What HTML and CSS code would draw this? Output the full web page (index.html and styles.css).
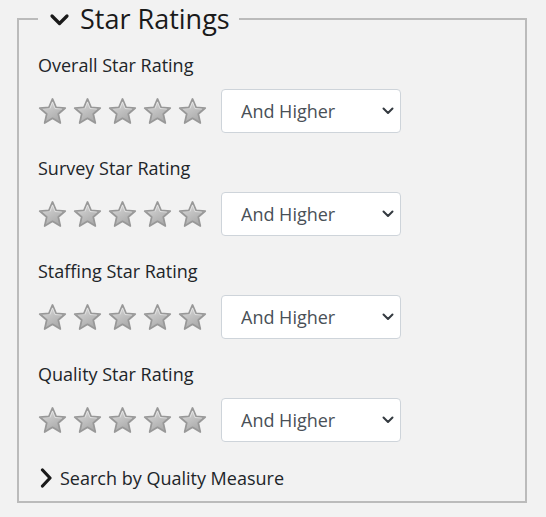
FILE: index.html
```html
<!DOCTYPE html>
<html>
<head>
<meta charset="utf-8">
<link rel="stylesheet" href="styles.css">
</head>
<body>
<svg width="0" height="0" class="defs">
  <defs>
    <linearGradient id="sg" x1="0" y1="0" x2="0.6" y2="1">
      <stop offset="0" stop-color="#e6e6e6"/>
      <stop offset="0.5" stop-color="#c4c4c4"/>
      <stop offset="1" stop-color="#a9a9a9"/>
    </linearGradient>
    <symbol id="star" viewBox="0 0 30 29">
      <path d="M15 1.5 L18.7 10.1 L28.2 10.9 L21 17.1 L23.1 26.4 L15 21.5 L6.9 26.4 L9 17.1 L1.8 10.9 L11.3 10.1 Z" fill="url(#sg)" stroke="#989898" stroke-width="1.8" stroke-linejoin="round"/>
      <path d="M15 4.5 L17.6 11.4 L24.6 12 M15 4.5 L12.4 11.4" fill="none" stroke="#f4f4f4" stroke-width="0.8" stroke-linejoin="round" opacity="0.7"/>
    </symbol>
  </defs>
</svg>
<fieldset class="panel">
  <legend class="panel-title">
    <svg class="chev-down" width="21" height="14" viewBox="0 0 21 14"><path d="M3 3 L10.5 10.5 L18 3" fill="none" stroke="#1a1a1a" stroke-width="3.2" stroke-linecap="round" stroke-linejoin="round"/></svg>
    <span>Star Ratings</span>
  </legend>

  <div class="group">
    <div class="label">Overall Star Rating</div>
    <div class="row">
      <div class="stars">
        <svg class="star"><use href="#star"/></svg><svg class="star"><use href="#star"/></svg><svg class="star"><use href="#star"/></svg><svg class="star"><use href="#star"/></svg><svg class="star"><use href="#star"/></svg>
      </div>
      <div class="select-wrap">
        <select class="select"><option>And Higher</option></select>
        <svg class="sel-chev" width="12" height="8" viewBox="0 0 12 8"><path d="M1.5 1.5 L6 6 L10.5 1.5" fill="none" stroke="#343a40" stroke-width="2" stroke-linecap="round" stroke-linejoin="round"/></svg>
      </div>
    </div>
  </div>

  <div class="group">
    <div class="label">Survey Star Rating</div>
    <div class="row">
      <div class="stars">
        <svg class="star"><use href="#star"/></svg><svg class="star"><use href="#star"/></svg><svg class="star"><use href="#star"/></svg><svg class="star"><use href="#star"/></svg><svg class="star"><use href="#star"/></svg>
      </div>
      <div class="select-wrap">
        <select class="select"><option>And Higher</option></select>
        <svg class="sel-chev" width="12" height="8" viewBox="0 0 12 8"><path d="M1.5 1.5 L6 6 L10.5 1.5" fill="none" stroke="#343a40" stroke-width="2" stroke-linecap="round" stroke-linejoin="round"/></svg>
      </div>
    </div>
  </div>

  <div class="group">
    <div class="label">Staffing Star Rating</div>
    <div class="row">
      <div class="stars">
        <svg class="star"><use href="#star"/></svg><svg class="star"><use href="#star"/></svg><svg class="star"><use href="#star"/></svg><svg class="star"><use href="#star"/></svg><svg class="star"><use href="#star"/></svg>
      </div>
      <div class="select-wrap">
        <select class="select"><option>And Higher</option></select>
        <svg class="sel-chev" width="12" height="8" viewBox="0 0 12 8"><path d="M1.5 1.5 L6 6 L10.5 1.5" fill="none" stroke="#343a40" stroke-width="2" stroke-linecap="round" stroke-linejoin="round"/></svg>
      </div>
    </div>
  </div>

  <div class="group">
    <div class="label">Quality Star Rating</div>
    <div class="row">
      <div class="stars">
        <svg class="star"><use href="#star"/></svg><svg class="star"><use href="#star"/></svg><svg class="star"><use href="#star"/></svg><svg class="star"><use href="#star"/></svg><svg class="star"><use href="#star"/></svg>
      </div>
      <div class="select-wrap">
        <select class="select"><option>And Higher</option></select>
        <svg class="sel-chev" width="12" height="8" viewBox="0 0 12 8"><path d="M1.5 1.5 L6 6 L10.5 1.5" fill="none" stroke="#343a40" stroke-width="2" stroke-linecap="round" stroke-linejoin="round"/></svg>
      </div>
    </div>
  </div>

  <div class="more">
    <svg class="chev-right" width="13" height="20" viewBox="0 0 13 20"><path d="M2.5 2 L10 10 L2.5 18" fill="none" stroke="#1a1a1a" stroke-width="3.2" stroke-linecap="round" stroke-linejoin="round"/></svg>
    <span>Search by Quality Measure</span>
  </div>
</fieldset>
</body>
</html>
```

FILE: styles.css
```css
html, body {
  margin: 0;
  padding: 0;
  background: #f2f2f2;
}
body {
  font-family: "Open Sans", "Noto Sans", sans-serif;
  color: #212529;
}
.defs {
  position: absolute;
  width: 0;
  height: 0;
}
.panel {
  margin: 0 0 0 17px;
  width: 510px;
  height: 503px;
  box-sizing: border-box;
  border: 2px solid #bbbbbb;
  padding: 0 19px 0 19px;
}
.panel-title {
  margin-left: 0;
  padding: 0 9px 0 11px;
  display: flex;
  align-items: center;
  gap: 10px;
  font-size: 27px;
  line-height: 38px;
  color: #1a1a1a;
}
.chev-down {
  display: block;
  margin-top: 2px;
}
.group {
  margin-top: 15px;
}
.group + .group {
  margin-top: 23px;
}
.label {
  font-size: 18px;
  line-height: 24px;
  margin-bottom: 12px;
}
.row {
  display: flex;
  align-items: center;
  height: 44px;
}
.stars {
  display: flex;
  gap: 6px;
  margin-right: 14px;
}
.star {
  width: 29px;
  height: 29px;
  display: block;
}
.select-wrap {
  position: relative;
  width: 180px;
  height: 44px;
}
.select {
  -webkit-appearance: none;
  appearance: none;
  width: 100%;
  height: 100%;
  box-sizing: border-box;
  border: 1px solid #ced4da;
  border-radius: 4px;
  background: #ffffff;
  padding: 0 0 0 19px;
  font-family: "Open Sans", "Noto Sans", sans-serif;
  font-size: 18px;
  color: #495057;
}
.sel-chev {
  position: absolute;
  right: 7px;
  top: 18px;
  pointer-events: none;
}
.more {
  margin-top: 24px;
  display: flex;
  align-items: center;
  gap: 7px;
  font-size: 18px;
  line-height: 24px;
}
.chev-right {
  display: block;
  margin-left: 2px;
}
```
